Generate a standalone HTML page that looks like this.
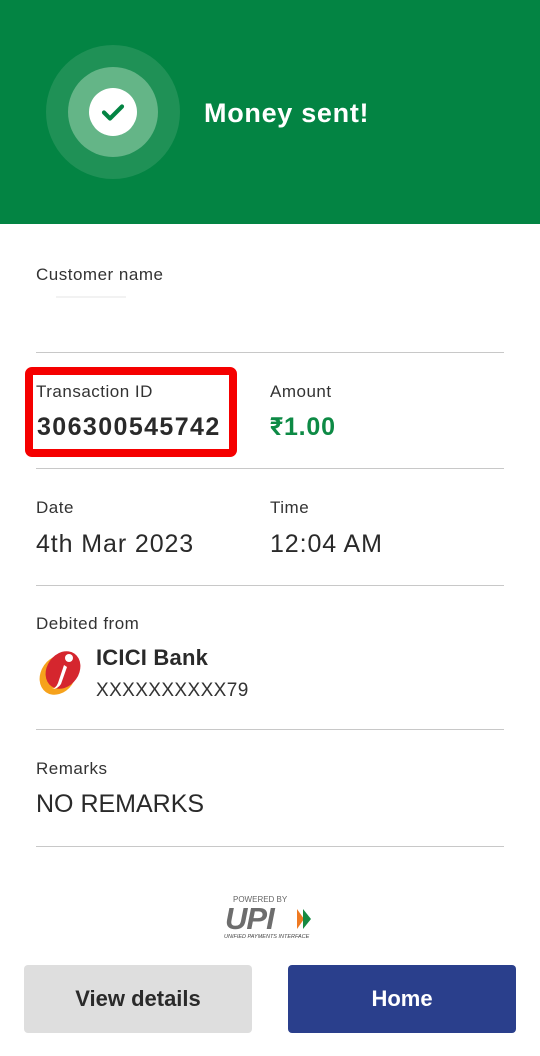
<!DOCTYPE html>
<html><head><meta charset="utf-8"><style>
*{margin:0;padding:0;box-sizing:border-box}
body{width:540px;height:1056px;background:#fff;font-family:"Liberation Sans",Roboto,sans-serif;color:#212121;position:relative;overflow:hidden}
.hdr{position:absolute;left:0;top:0;width:540px;height:224px;background:#038443}
.c{position:absolute;border-radius:50%}
.t{position:absolute;white-space:nowrap}
.lbl{font-size:17px;color:#333;letter-spacing:0.5px}
.val{font-size:25px;color:#2a2a2a;letter-spacing:0.9px}
.hr{position:absolute;left:36px;width:468px;height:1px;background:#c8c8c8}
.btn{position:absolute;top:965px;height:68px;border-radius:4px;font-size:22px;font-weight:bold;display:flex;align-items:center;justify-content:center}
</style></head><body>
<div class="hdr">
 <div class="c" style="left:46px;top:45px;width:134px;height:134px;background:#1f9156"></div>
 <div class="c" style="left:68px;top:67px;width:90px;height:90px;background:#64b587"></div>
 <div class="c" style="left:89px;top:88px;width:48px;height:48px;background:#fff"></div>
 <svg style="position:absolute;left:89px;top:88px" width="48" height="48" viewBox="0 0 48 48"><path d="M15 24.5l6 6 12-12" fill="none" stroke="#038443" stroke-width="4.2" stroke-linecap="round" stroke-linejoin="round"/></svg>
 <div class="t" style="left:204px;top:98px;font-size:27px;font-weight:bold;color:#fff;letter-spacing:0.7px">Money sent!</div>
</div>
<div class="t lbl" style="left:36px;top:265px">Customer name</div>
<div style="position:absolute;left:56px;top:296px;width:70px;height:2px;background:#f2f2f2"></div>
<div class="hr" style="top:352px"></div>
<div style="position:absolute;left:25px;top:367px;width:212px;height:90px;border:8px solid #f50000;border-radius:7px"></div>
<div class="t lbl" style="left:36px;top:382px">Transaction ID</div>
<div class="t" style="left:37px;top:413px;font-size:25px;font-weight:bold;color:#2a2a2a;letter-spacing:1.4px">306300545742</div>
<div class="t lbl" style="left:270px;top:382px">Amount</div>
<div class="t" style="left:270px;top:413px;font-size:25px;font-weight:bold;color:#0d8a45;letter-spacing:0.8px">₹1.00</div>
<div class="hr" style="top:468px"></div>
<div class="t lbl" style="left:36px;top:498px">Date</div>
<div class="t val" style="left:36px;top:530px">4th Mar 2023</div>
<div class="t lbl" style="left:270px;top:498px">Time</div>
<div class="t val" style="left:270px;top:530px">12:04 AM</div>
<div class="hr" style="top:585px"></div>
<div class="t lbl" style="left:36px;top:614px">Debited from</div>
<svg style="position:absolute;left:36px;top:645px" width="50" height="52" viewBox="0 0 50 52">
 <ellipse cx="22" cy="30" rx="17" ry="21" transform="rotate(35 22 30)" fill="#f6a21c"/>
 <ellipse cx="27" cy="25" rx="16" ry="20" transform="rotate(35 27 25)" fill="#d5262e"/>
 <circle cx="33" cy="13" r="4" fill="#fff"/>
 <path d="M28 20 L22 38 Q20 43 16 44 Q22 44 25 39 L31 22 Z" fill="#fff"/>
</svg>
<div class="t" style="left:96px;top:645px;font-size:22px;font-weight:bold;color:#2a2a2a;letter-spacing:0.2px">ICICI Bank</div>
<div class="t" style="left:96px;top:680px;font-size:19px;color:#333;letter-spacing:0.4px">XXXXXXXXXX79</div>
<div class="hr" style="top:729px"></div>
<div class="t lbl" style="left:36px;top:759px">Remarks</div>
<div class="t val" style="left:36px;top:790px;letter-spacing:0">NO REMARKS</div>
<div class="hr" style="top:846px"></div>
<div class="t" style="left:233px;top:895px;font-size:8px;color:#666">POWERED BY</div>
<div class="t" style="left:225px;top:901px;font-size:31px;font-weight:bold;font-style:italic;color:#6d6d6d;letter-spacing:-1px">UPI</div>
<svg style="position:absolute;left:294px;top:908px" width="22" height="22" viewBox="0 0 22 22"><path d="M3 1l7 10-7 10z" fill="#ef7a22"/><path d="M9 1l8 10-8 10z" fill="#168a42"/></svg>
<div class="t" style="left:224px;top:934px;font-size:5.5px;font-style:italic;color:#444">UNIFIED PAYMENTS INTERFACE</div>
<div class="btn" style="left:24px;width:228px;background:#dedede;color:#2a2a2a">View details</div>
<div class="btn" style="left:288px;width:228px;background:#2a3f8c;color:#fff">Home</div>
</body></html>
